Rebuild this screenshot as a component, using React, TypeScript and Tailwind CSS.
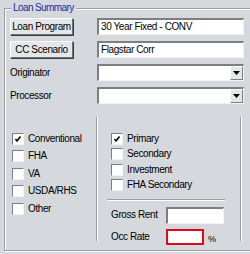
const panel = "bg-[#d5d9dd]"

function Btn({ text }: { text: string }) {
    return (
        <div className="w-[63px] h-[17px] flex items-center justify-center bg-[#e4e6e8] border border-t-white border-l-white border-b-[#6f7275] border-r-[#6f7275] shadow-[1px_1px_0_#3c3c3c]">
            {text}
        </div>
    )
}

function TextBox({ text = "", w = "w-[147px]" }: { text?: string; w?: string }) {
    return (
        <div className={`${w} h-[17px] flex items-center pl-[2px] bg-white border-t-2 border-l-2 border-t-[#7c7f82] border-l-[#7c7f82] border-b border-r border-b-[#f2f3f4] border-r-[#f2f3f4] overflow-hidden`}>
            {text}
        </div>
    )
}

function Combo() {
    return (
        <div className="w-[147px] h-[17px] flex justify-end bg-white border-t-2 border-l-2 border-t-[#7c7f82] border-l-[#7c7f82] border-b border-r border-b-[#f2f3f4] border-r-[#f2f3f4]">
            <div className="w-[13px] h-full flex items-center justify-center bg-[#e4e6e8] border border-t-white border-l-white border-b-[#7c7f82] border-r-[#7c7f82]">
                <svg width="7" height="4" viewBox="0 0 7 4"><path d="M0 0h7L3.5 4z" fill="#000" /></svg>
            </div>
        </div>
    )
}

function Check({ label, checked = false, h }: { label: string; checked?: boolean; h: string }) {
    return (
        <div className={`${h} flex items-center`}>
            <div className="w-[12px] h-[12px] mr-[4px] bg-white border-t border-l border-t-[#7c7f82] border-l-[#7c7f82] border-b border-r border-b-[#f2f3f4] border-r-[#f2f3f4] flex items-center justify-center">
                {checked && (
                    <svg width="8" height="8" viewBox="0 0 8 8"><path d="M1.5 4l1.5 2 3.5-4.5" fill="none" stroke="#000" strokeWidth="1.6" /></svg>
                )}
            </div>
            {label}
        </div>
    )
}

export default function App() {
    return (
        <div className={`w-[250px] h-[254px] overflow-hidden ${panel} pt-[8px] pl-[4px] text-[10px] tracking-[-0.4px] leading-none whitespace-nowrap text-black font-['Liberation_Sans',Arial,sans-serif]`}>
            <div className="w-[260px] h-[243px] border border-[#9a9ea3] shadow-[inset_1px_1px_0_#fff,1px_1px_0_#fff]">
                {/* рамка группы */}
                <div className={`-mt-[8px] ml-[6px] w-fit ${panel} px-[2px] leading-[14px] text-[#1f2a9c] tracking-[-0.6px] text-[10px]`}>Loan Summary</div>

                <div className="mt-[3px] pl-[5px] flex flex-col gap-[6px]">
                    <div className="h-[17px] flex items-center">
                        <div className="w-[87px]"><Btn text="Loan Program" /></div>
                        <TextBox text="30 Year Fixed - CONV" />
                    </div>
                    <div className="h-[17px] flex items-center">
                        <div className="w-[87px]"><Btn text="CC Scenario" /></div>
                        <TextBox text="Flagstar Corr" />
                    </div>
                    <div className="h-[17px] flex items-center">
                        <div className="w-[87px]">Originator</div>
                        <Combo />
                    </div>
                    <div className="h-[17px] flex items-center">
                        <div className="w-[87px]">Processor</div>
                        <Combo />
                    </div>
                </div>

                <div className="mt-[13px] flex h-[124px]">
                    {/* левая колонка */}
                    <div className="w-[92px] pl-[7px] pt-[13px] border-r border-r-[#9a9ea3]">
                        <Check label="Conventional" checked h="h-[17.5px]" />
                        <Check label="FHA" h="h-[17.5px]" />
                        <Check label="VA" h="h-[17.5px]" />
                        <Check label="USDA/RHS" h="h-[17.5px]" />
                        <Check label="Other" h="h-[17.5px]" />
                    </div>
                    {/* правая колонка */}
                    <div className="w-[144px] border-l border-l-white border-r border-r-[#9a9ea3] flex flex-col">
                        <div className="pl-[13px] pt-[14px]">
                            <Check label="Primary" checked h="h-[15.5px]" />
                            <Check label="Secondary" h="h-[15.5px]" />
                            <Check label="Investment" h="h-[15.5px]" />
                            <Check label="FHA Secondary" h="h-[15.5px]" />
                        </div>
                        <div className="mt-[6px] ml-[9px] w-[118px] border-t border-t-[#9a9ea3] border-b border-b-white" />
                        <div className="pl-[13px] pt-[6px] flex flex-col gap-[6px]">
                            <div className="h-[16px] flex items-center">
                                <div className="w-[55px]">Gross Rent</div>
                                <TextBox w="w-[58px]" />
                            </div>
                            <div className="h-[16px] flex items-center">
                                <div className="w-[55px]">Occ Rate</div>
                                <div className="w-[38px] h-[16px] bg-white border-2 border-[#e3061b]" />
                                <span className="ml-[4px] mt-[4px] text-[9px]">%</span>
                            </div>
                        </div>
                    </div>
                    <div className="w-px bg-white" />
                </div>
            </div>
        </div>
    )
}
